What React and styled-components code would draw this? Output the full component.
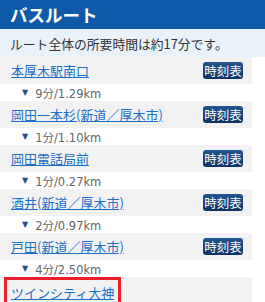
import React from "react";
import styled, { createGlobalStyle } from "styled-components";

const GlobalStyle = createGlobalStyle`
  body {
    margin: 0;
    background: #fff;
    font-family: "Noto Sans CJK JP", "Noto Sans", sans-serif;
  }
`;

const Panel = styled.div`
  width: 265px;
`;

const Header = styled.div`
  height: 29px;
  background: #0e59a8;
  display: flex;
  align-items: center;
  padding-left: 10px;
  color: #fff;
  font-size: 17.5px;
  font-weight: bold;
`;

const Summary = styled.div`
  height: 28px;
  background: #e9f1f9;
  display: flex;
  align-items: center;
  padding-left: 10px;
  color: #333;
  font-size: 12.8px;
`;

const List = styled.div`
  width: 252px;
  display: flex;
  flex-direction: column;
`;

const StopRow = styled.div`
  height: 27px;
  background: #f2f2f2;
  display: flex;
  align-items: center;
  justify-content: space-between;
  padding: 0 9px 0 ${(p) => (p.$current ? 4 : 11)}px;
  box-sizing: border-box;
`;

const StopLink = styled.a`
  color: #1c6fc6;
  font-size: 13px;
  text-decoration: underline;
  cursor: pointer;
  line-height: 16px;
`;

const Highlight = styled.span`
  display: inline-block;
  border: 3px solid #e8202a;
  padding: 3px 4px 6px 4px;
  margin-top: 5px;
  line-height: 16px;
`;

const TimeButton = styled.button`
  width: 40px;
  height: 17px;
  padding: 0;
  border: none;
  border-radius: 3px;
  background: linear-gradient(#24558f, #0b3366);
  color: #fff;
  font-family: inherit;
  font-size: 12.5px;
  line-height: 17px;
`;

const Leg = styled.div`
  height: 17px;
  display: flex;
  align-items: center;
  gap: 7px;
  padding-left: 22px;
  color: #666;
  font-size: 11.5px;
  font-family: "DejaVu Sans", "Noto Sans CJK JP", sans-serif;
`;

const Arrow = styled.span`
  color: #1d4f8a;
  font-size: 8px;
  font-family: "DejaVu Sans", sans-serif;
`;

const route = [
  { name: "本厚木駅南口", leg: "9分/1.29km" },
  { name: "岡田一本杉(新道／厚木市)", leg: "1分/1.10km" },
  { name: "岡田電話局前", leg: "1分/0.27km" },
  { name: "酒井(新道／厚木市)", leg: "2分/0.97km" },
  { name: "戸田(新道／厚木市)", leg: "4分/2.50km" },
];

export default function App() {
  return (
    <Panel>
      <GlobalStyle />
      <Header>バスルート</Header>
      <Summary>ルート全体の所要時間は約17分です。</Summary>
      <List>
        {route.map((s) => (
          <React.Fragment key={s.name}>
            <StopRow>
              <StopLink>{s.name}</StopLink>
              <TimeButton>時刻表</TimeButton>
            </StopRow>
            <Leg>
              <Arrow>▼</Arrow>
              {s.leg}
            </Leg>
          </React.Fragment>
        ))}
        <StopRow $current>
          <Highlight>
            <StopLink>ツインシティ大神</StopLink>
          </Highlight>
        </StopRow>
      </List>
    </Panel>
  );
}
